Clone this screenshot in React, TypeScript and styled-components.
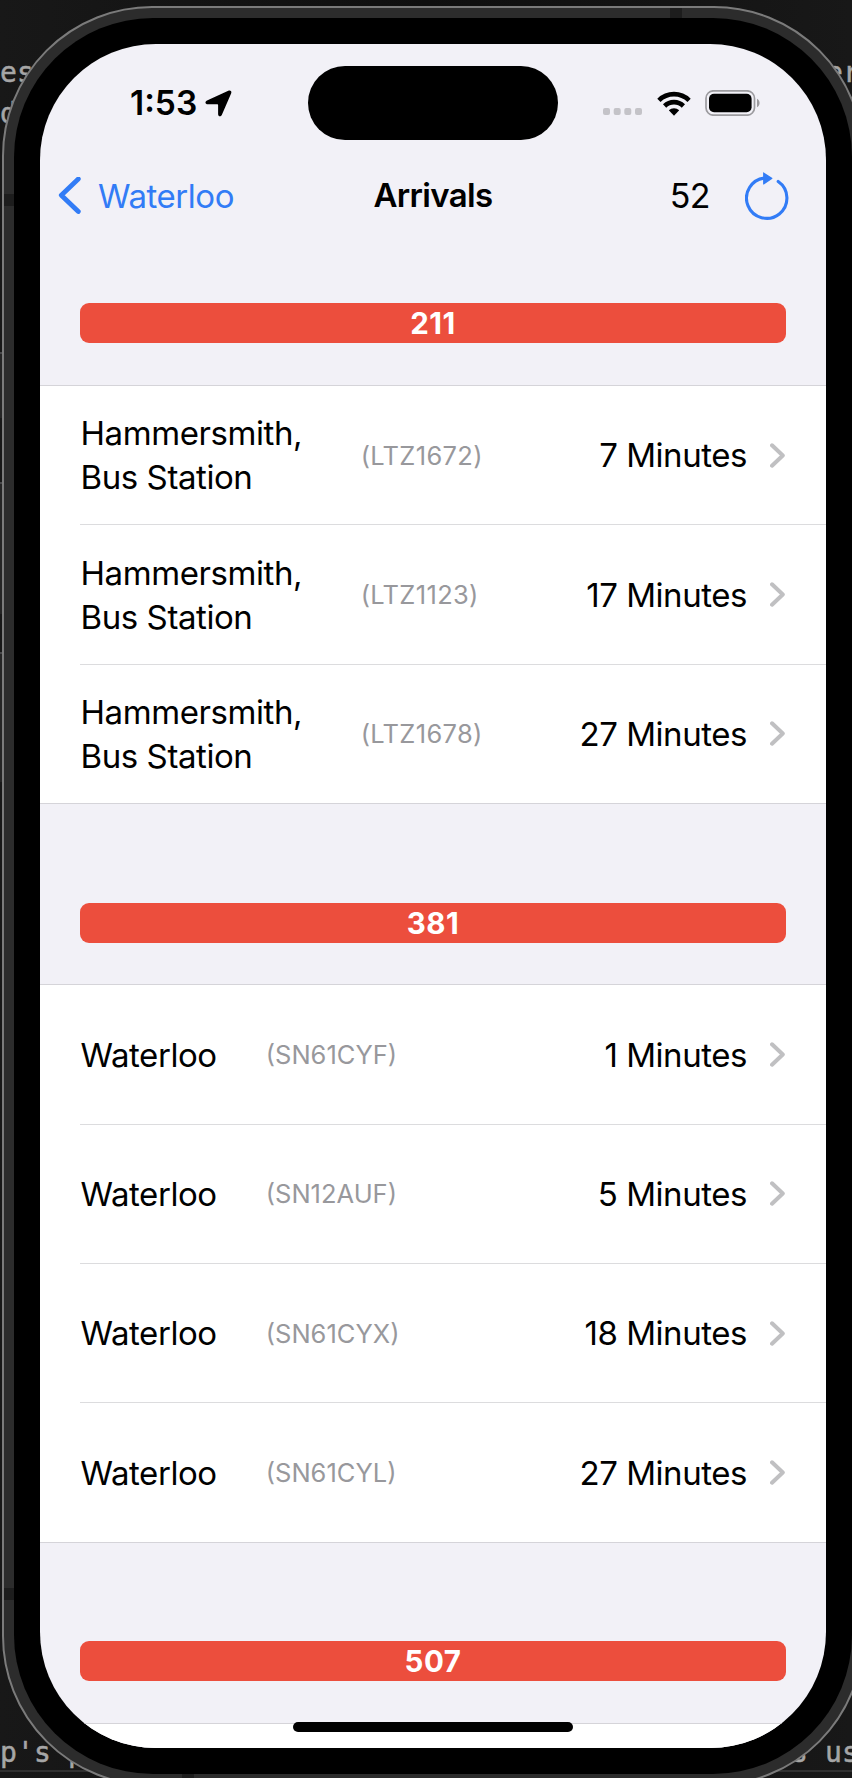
import React from "react";
import styled, { createGlobalStyle } from "styled-components";

const Global = createGlobalStyle`
  * { box-sizing: border-box; }
  html, body { margin: 0; padding: 0; background: #151515; overflow: hidden; }
  body { font-family: Inter, "Liberation Sans", sans-serif; color: #000; }
`;

const Desktop = styled.div`
  position: relative;
  width: 852px;
  height: 1778px;
  overflow: hidden;
  padding: 6px 0 0 2px;
  background: linear-gradient(90deg, #181818, #0f0f0f 50%, #181818);
`;

const CodeText = styled.div<{ $x: number; $y: number }>`
  position: absolute;
  left: ${(p) => p.$x}px;
  top: ${(p) => p.$y}px;
  font: 28px/34px "DejaVu Sans Mono", monospace;
  letter-spacing: 0.14px;
  color: #a6a6a6;
  -webkit-text-stroke: 0.5px #a6a6a6;
  white-space: pre;
`;

const EditorPane = styled.div<{ $y: number; $h: number; $shade: string }>`
  position: absolute;
  left: 0;
  top: ${(p) => p.$y}px;
  width: 4px;
  height: ${(p) => p.$h}px;
  background: ${(p) => p.$shade};
  border-top: 2px solid #48484a;
`;

const EditorRule = styled.div`
  position: absolute;
  left: 0;
  top: 1770px;
  width: 852px;
  height: 2px;
  background: #303030;
`;

const Phone = styled.div`
  position: relative;
  width: 862px;
  height: 1780px;
  padding: 10px;
  border: 2px solid #7b7b7b;
  border-radius: 150px;
  background: #2c2c2c;
`;

const Antenna = styled.div<{ $x: number; $y: number; $w: number; $h: number }>`
  position: absolute;
  left: ${(p) => p.$x}px;
  top: ${(p) => p.$y}px;
  width: ${(p) => p.$w}px;
  height: ${(p) => p.$h}px;
  background: #1d1d1d;
`;

const Bezel = styled.div`
  position: relative;
  width: 838px;
  height: 1756px;
  padding: 26px;
  border-radius: 139px;
  background: #000;
`;

const Screen = styled.div`
  position: relative;
  width: 786px;
  height: 1704px;
  overflow: hidden;
  border-radius: 116px;
  background: #f2f1f7;
`;

const StatusBar = styled.div`
  display: flex;
  align-items: center;
  justify-content: space-between;
  height: 118px;
  padding: 0 65px 0 90px;
`;

const StatusLeft = styled.div`
  display: flex;
  align-items: center;
  gap: 8px;
`;

const Clock = styled.span`
  font-size: 33.5px;
  font-weight: 600;
`;

const Island = styled.div`
  position: absolute;
  left: 268px;
  top: 22px;
  width: 250px;
  height: 74px;
  border-radius: 37px;
  background: #000;
`;

const StatusRight = styled.div`
  display: flex;
  align-items: center;
`;

const NavBar = styled.div`
  display: grid;
  grid-template-columns: 1fr auto 1fr;
  align-items: center;
  height: 68px;
  padding: 0 18px;
`;

const Back = styled.div`
  display: flex;
  align-items: center;
  gap: 17px;
  color: #327cf6;
  font-size: 33px;
  letter-spacing: -0.45px;
  span { margin-top: -1px; }
`;

const Title = styled.div`
  margin-top: -2px;
  font-size: 33px;
  font-weight: 600;
  letter-spacing: -0.65px;
`;

const NavRight = styled.div`
  display: flex;
  align-items: center;
  justify-content: flex-end;
  gap: 35px;
  padding-right: 19px;
  font-size: 34px;
  letter-spacing: -0.6px;
  span { margin-top: -1px; }
`;

const List = styled.div`
  padding-top: 73.3px;
`;

const Section = styled.section`
  & + & { padding-top: 98.6px; }
`;

const RouteBadge = styled.div`
  display: flex;
  align-items: center;
  justify-content: center;
  height: 40px;
  margin: 0 40px 41.8px;
  border-radius: 9px;
  background: #ec4e3d;
  color: #fff;
  font-size: 29.5px;
  font-weight: 700;
  letter-spacing: 0.5px;
`;

const Rows = styled.div`
  border-top: 1px solid #d5d4d9;
  border-bottom: 1px solid #d5d4d9;
  background: #fff;
`;

const Row = styled.div`
  display: flex;
  align-items: center;
  height: 138.3px;
  margin-left: 40px;
  padding-right: 41.5px;
  & + & {
    height: 139.33px;
    border-top: 1px solid #dcdcde;
  }
`;

const Destination = styled.div`
  padding-left: 0.5px;
  font-size: 33px;
  line-height: 44px;
  letter-spacing: -0.42px;
  white-space: pre-line;
`;

const Vehicle = styled.div<{ $gap: number; $tracking: number }>`
  margin-left: ${(p) => p.$gap}px;
  color: #98989c;
  font-size: 25.5px;
  letter-spacing: ${(p) => p.$tracking}px;
`;

const Due = styled.div`
  margin-left: auto;
  margin-right: 22.5px;
  font-size: 33px;
  letter-spacing: -0.45px;
`;

const HomeIndicator = styled.div`
  position: absolute;
  left: 253px;
  bottom: 16px;
  width: 280px;
  height: 10px;
  border-radius: 5px;
  background: #000;
`;

type Arrival = { vehicle: string; due: string };
type Route = { route: string; destination: string; gap: number; tracking: number; arrivals: Arrival[] };

const routes: Route[] = [
  {
    route: "211",
    destination: "Hammersmith,\nBus Station",
    gap: 58.5,
    tracking: 0.33,
    arrivals: [
      { vehicle: "LTZ1672", due: "7" },
      { vehicle: "LTZ1123", due: "17" },
      { vehicle: "LTZ1678", due: "27" },
    ],
  },
  {
    route: "381",
    destination: "Waterloo",
    gap: 49,
    tracking: 0,
    arrivals: [
      { vehicle: "SN61CYF", due: "1" },
      { vehicle: "SN12AUF", due: "5" },
      { vehicle: "SN61CYX", due: "18" },
      { vehicle: "SN61CYL", due: "27" },
    ],
  },
];

const LocationIcon = () => (
  <svg width="27" height="27" viewBox="0 0 27 27">
    <path d="M2 10.4 23.3.8c2.2-1 3.7.6 2.8 2.7L16.8 24.9c-1 2.2-3.7 1.8-3.7-.9V15c0-.5-.2-.7-.7-.7H3C.2 14.3-.5 11.6 2 10.4Z" />
  </svg>
);

const SignalDots = () => (
  <svg width="39" height="7" viewBox="0 0 39 7" style={{ marginTop: 17 }} fill="#c4c3c8">
    {[0, 10.7, 21.3, 32].map((x) => (
      <rect key={x} x={x} width="7" height="7" rx="2" />
    ))}
  </svg>
);

const WifiIcon = () => (
  <svg width="34" height="25" viewBox="0 0 34 25" style={{ marginLeft: 15 }}>
    <g fill="none" stroke="#000" strokeWidth="4.6">
      <path d="M1.9 9.3a21.5 21.5 0 0 1 30.2 0" />
      <path d="M7.6 15a13.4 13.4 0 0 1 18.8 0" />
    </g>
    <path d="M11.8 19.3a7.5 7.5 0 0 1 10.4 0L17 24.8Z" />
  </svg>
);

const BatteryIcon = () => (
  <svg width="56" height="26" viewBox="0 0 56 26" style={{ marginLeft: 14 }}>
    <rect x="1" y=".8" width="48.5" height="24.4" rx="7.5" fill="none" stroke="#9c9b9f" strokeWidth="1.7" />
    <rect x="4" y="3.8" width="42.6" height="18.4" rx="5" />
    <path d="M52 8.8c3.4 1.6 3.4 7 0 8.4Z" fill="#9c9b9f" />
  </svg>
);

const BackChevron = () => (
  <svg width="23" height="38" viewBox="0 0 23 38" fill="none" stroke="#327cf6" strokeWidth="4.8" strokeLinecap="round" strokeLinejoin="round">
    <path d="M20.3 1.9 3.3 18.2l17 16.3" />
  </svg>
);

const RefreshIcon = () => (
  <svg width="44" height="48" viewBox="0 0 44 48">
    <path d="M33.2 9.5A20.2 20.2 0 1 1 20 6" fill="none" stroke="#327cf6" strokeWidth="3.1" strokeLinecap="round" />
    <path d="M18.4 .3 27 5.7c.6.4.6.8 0 1.2L18.9 12.4c-.5.3-.8.1-.8-.4V.5c0-.3.1-.3.3-.2Z" fill="#327cf6" />
  </svg>
);

const RowChevron = () => (
  <svg width="15" height="25" viewBox="0 0 15 25" fill="none" stroke="#c0c0c2" strokeWidth="4" strokeLinecap="round" strokeLinejoin="round">
    <path d="m2 2.3 10.8 10.2L2 22.7" />
  </svg>
);

export default function App() {
  return (
    <>
      <Global />
      <Desktop>
        <CodeText $x={0} $y={56}>es</CodeText>
        <CodeText $x={0} $y={97}>d</CodeText>
        <CodeText $x={826} $y={56}>er</CodeText>
        <CodeText $x={0} $y={1736}>p's p</CodeText>
        <CodeText $x={791} $y={1736}>s us</CodeText>
        <EditorPane $y={352} $h={66} $shade="#252525" />
        <EditorPane $y={482} $h={132} $shade="#252525" />
        <EditorPane $y={652} $h={130} $shade="#252525" />
        <EditorRule />
        <Phone>
          <Antenna $x={666} $y={0} $w={12} $h={10} />
          <Antenna $x={0} $y={186} $w={10} $h={12} />
          <Antenna $x={0} $y={1580} $w={10} $h={12} />
          <Antenna $x={178} $y={1766} $w={12} $h={10} />
          <Bezel>
            <Screen>
              <StatusBar>
                <StatusLeft>
                  <Clock>1:53</Clock>
                  <LocationIcon />
                </StatusLeft>
                <StatusRight>
                  <SignalDots />
                  <WifiIcon />
                  <BatteryIcon />
                </StatusRight>
              </StatusBar>
              <Island />
              <NavBar>
                <Back>
                  <BackChevron />
                  <span>Waterloo</span>
                </Back>
                <Title>Arrivals</Title>
                <NavRight>
                  <span>52</span>
                  <RefreshIcon />
                </NavRight>
              </NavBar>
              <List>
                {routes.map((r) => (
                  <Section key={r.route}>
                    <RouteBadge>{r.route}</RouteBadge>
                    <Rows>
                      {r.arrivals.map((a) => (
                        <Row key={a.vehicle}>
                          <Destination>{r.destination}</Destination>
                          <Vehicle $gap={r.gap} $tracking={r.tracking}>({a.vehicle})</Vehicle>
                          <Due>{a.due} Minutes</Due>
                          <RowChevron />
                        </Row>
                      ))}
                    </Rows>
                  </Section>
                ))}
                <Section>
                  <RouteBadge>507</RouteBadge>
                  <Rows>
                    <Row />
                  </Rows>
                </Section>
              </List>
              <HomeIndicator />
            </Screen>
          </Bezel>
        </Phone>
      </Desktop>
    </>
  );
}
